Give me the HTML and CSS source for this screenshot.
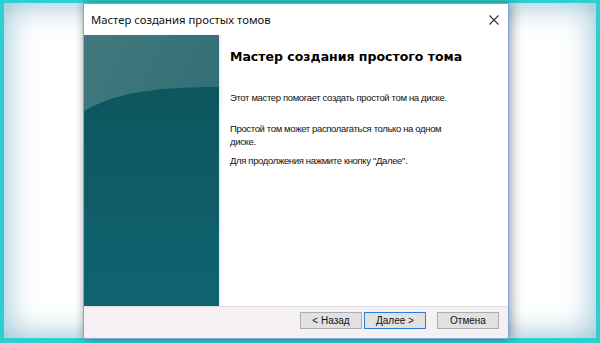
FILE: index.html
```html
<!DOCTYPE html>
<html lang="ru">
<head>
  <meta charset="UTF-8" />
  <meta name="viewport" content="width=device-width" />
  <title>Мастер создания простых томов</title>
  <link rel="stylesheet" href="styles.css">
</head>
<body>
  <div class="frame">
    <div class="panel">
      <div class="dialog">
        <div class="titlebar">
          <span class="title">Мастер создания простых томов</span>
          <svg class="close" width="10" height="10" viewBox="0 0 10 10">
            <path d="M0.5 0.5 L9.5 9.5 M9.5 0.5 L0.5 9.5" stroke="#333" stroke-width="1.1" fill="none" />
          </svg>
        </div>
        <div class="body">
          <div class="side">
            <svg width="135" height="271" viewBox="0 0 135 271">
              <defs>
                <linearGradient id="topg" x1="0" y1="0" x2="1" y2="1">
                  <stop offset="0" stop-color="#407a7f" />
                  <stop offset="1" stop-color="#2a676d" />
                </linearGradient>
                <linearGradient id="lowg" x1="0" y1="0" x2="0" y2="1">
                  <stop offset="0" stop-color="#0c565e" />
                  <stop offset="1" stop-color="#116372" />
                </linearGradient>
              </defs>
              <rect width="135" height="271" fill="url(#topg)" />
              <path d="M0 76 C 28 60, 62 52, 135 52 L135 271 L0 271 Z" fill="url(#lowg)" />
            </svg>
          </div>
          <div class="content">
            <h1>Мастер создания простого тома</h1>
            <p class="first">Этот мастер помогает создать простой том на диске.</p>
            <p>Простой том может располагаться только на одном<br>диске.</p>
            <p>Для продолжения нажмите кнопку "Далее".</p>
          </div>
        </div>
        <div class="footer">
          <button class="btn">&lt; Назад</button>
          <button class="btn default">Далее &gt;</button>
          <button class="btn cancel">Отмена</button>
        </div>
      </div>
    </div>
  </div>
</body>
</html>
```

FILE: styles.css
```css
body {
  margin: 0;
  width: 600px;
  height: 343px;
  background: #2dd0d0;
  font-family: "Liberation Sans", Arial, sans-serif;
  overflow: hidden;
}
.frame {
  padding: 4px;
  height: 335px;
}
.panel {
  height: 335px;
  background: #fff;
  box-shadow: inset 0 0 32px rgba(60, 140, 175, 0.6);
  padding-left: 79px;
}
.dialog {
  width: 424px;
  height: 334px;
  margin-top: -1px;
  background: #fff;
  border: 1px solid #7aa7dc;
  box-shadow: 4px 0 10px rgba(0, 0, 0, 0.3), -2px 0 6px rgba(0, 0, 0, 0.15);
  display: flex;
  flex-direction: column;
}
.titlebar {
  height: 31px;
  display: flex;
  align-items: center;
  justify-content: space-between;
  padding: 0 8px 0 7px;
}
.title {
  font-family: "Noto Sans", sans-serif;
  font-size: 11.3px;
  color: #111;
}
.close {
  margin-right: 1px;
}
.body {
  display: flex;
  height: 271px;
}
.side {
  width: 135px;
  height: 271px;
  box-shadow: 2px 0 2px rgba(0, 0, 0, 0.08);
}
.side svg {
  display: block;
}
.content {
  flex: 1;
  padding: 14px 0 0 11px;
  color: #111;
}
h1 {
  margin: 0;
  font-family: "DejaVu Sans", Verdana, sans-serif;
  font-size: 12.5px;
  font-weight: bold;
  color: #000;
  line-height: 16px;
}
p {
  margin: 0 0 6px;
  font-size: 9.5px;
  letter-spacing: -0.35px;
  line-height: 13px;
}
p.first {
  margin-top: 26px;
  margin-bottom: 18px;
}
.footer {
  flex: 1;
  background: #f5f0f4;
  border-top: 1px solid #dcdcdc;
  display: flex;
  justify-content: flex-end;
  align-items: flex-start;
  padding: 5px 9px 0 0;
}
.btn {
  width: 62px;
  height: 17px;
  margin: 0;
  padding: 0;
  background: #e1e1e1;
  border: 1px solid #adadad;
  font-family: "Liberation Sans", Arial, sans-serif;
  font-size: 10px;
  color: #111;
}
.default {
  border-color: #2a7fd4;
  margin-left: 2px;
}
.cancel {
  margin-left: 11px;
}
```
